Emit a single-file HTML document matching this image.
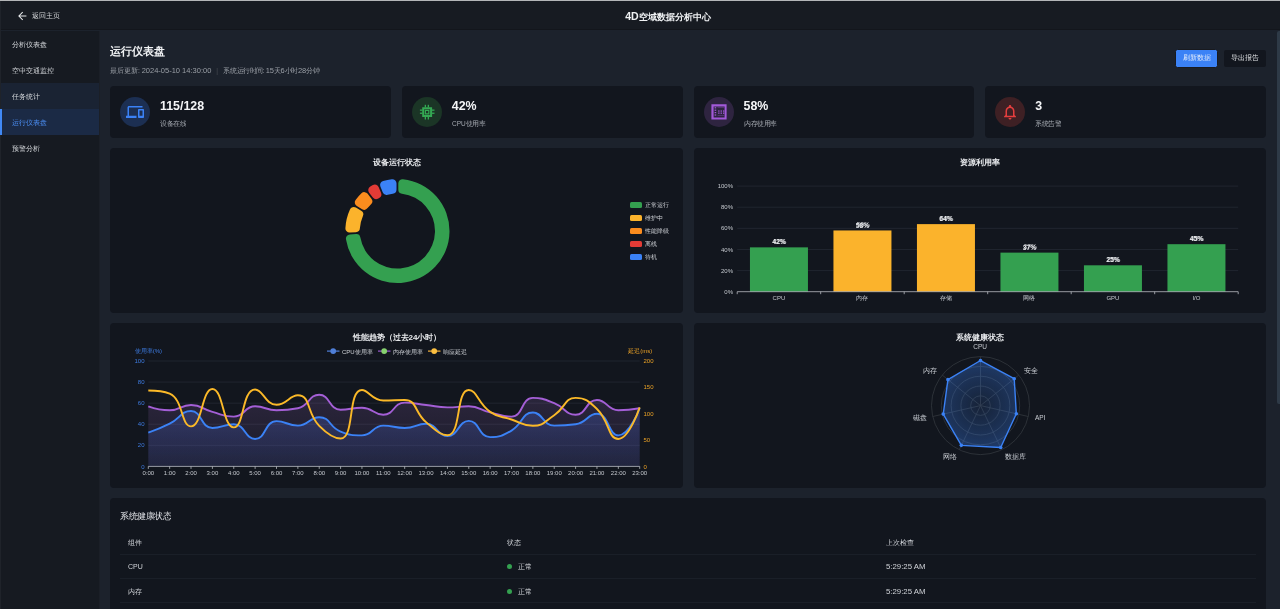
<!DOCTYPE html>
<html><head><meta charset="utf-8">
<style>
*{box-sizing:border-box;margin:0;padding:0}
html,body{width:1280px;height:609px;overflow:hidden;background:#1c222c;font-family:"Liberation Sans",sans-serif;color:#e6e8eb;position:relative}
#leftline{position:absolute;left:0;top:1px;width:1px;height:608px;background:#1f232a;z-index:5}
#wrap{position:absolute;left:0;top:0;width:1280px;height:609px;will-change:transform}
#topline{position:absolute;left:0;top:0;width:1280px;height:1px;background:#b4b6b8}
#header{position:absolute;left:0;top:1px;width:1280px;height:29px;background:#171b22;border-bottom:1px solid #13161c}
#back{position:absolute;left:17.5px;top:10px;font-size:7px;line-height:8px;color:#d8dadd;display:flex;align-items:center}
#back svg{margin-right:4.5px}
#htitle{position:absolute;left:0;width:1336px;top:10px;text-align:center;font-size:9px;line-height:10px;font-weight:bold;color:#f0f2f4}
#side{position:absolute;left:0;top:31px;width:100px;height:578px;background:#161a21;border-right:1px solid #1b1f27}
.nav{position:absolute;left:0;width:99px;height:26px;font-size:7px;color:#d4d7db;padding-left:12px;line-height:27.5px}
.nav.hover{background:#1a2333}
.nav.active{background:#1b2a45;color:#4a8cf0}
.nav.active:before{content:"";position:absolute;left:0;top:0;width:2.3px;height:26px;background:#4189f5;z-index:6}
#scroll{position:absolute;left:1276.8px;top:31px;width:4px;height:373px;background:#2e3a47;border-radius:2px 0 0 2px}
.card{position:absolute;background:#12161e;border-radius:4px}
.ic{position:absolute;left:10px;top:11.4px;width:30px;height:30px;border-radius:50%;display:flex;align-items:center;justify-content:center}
.ic svg{display:block}
.sval{position:absolute;left:50px;top:13.2px;font-size:12.4px;line-height:14px;font-weight:bold;color:#f4f5f7}
.slab{position:absolute;left:50px;top:33.5px;font-size:13px;line-height:16px;color:#a4a9b0;transform:scale(0.5);transform-origin:0 0;white-space:nowrap}
#ptitle{position:absolute;left:110.3px;top:44.8px;font-size:11.3px;line-height:12px;color:#f0f2f4;font-weight:bold}
#psub{position:absolute;left:110px;top:66.5px;font-size:6.6px;line-height:8px;color:#9a9fa6;white-space:pre}
#psub .sep{color:#4b5058;margin:0 5.5px 0 4.8px}
#psub .n{font-size:7.5px;letter-spacing:0}
.btn{position:absolute;font-size:7px;line-height:8px;text-align:center;border-radius:2px}
#charts{position:absolute;left:0;top:0}
.ct{font-size:8px;font-weight:bold;fill:#e8eaed;text-anchor:middle}
.lg{font-size:6px;fill:#cdd0d5}
.ax{font-size:6px;fill:#c4c8ce}
.bl{font-size:6.6px;fill:#e8eaed;text-anchor:middle;font-weight:bold;stroke:#12161e;stroke-width:0.6;paint-order:stroke}
.rl{font-size:6.5px;fill:#c8ccd2}
.ttl{position:absolute;font-size:17px;line-height:20px;color:#e0e2e6;transform:scale(0.5);transform-origin:0 0}
.th{position:absolute;font-size:7px;line-height:8px;color:#d0d3d8}
.td{position:absolute;font-size:7px;line-height:8px;color:#d0d3d8}
.rowline{position:absolute;left:120px;width:1136px;height:1px;background:#1a1f28}
.dot{position:absolute;left:506.8px;width:5px;height:5px;border-radius:50%;background:#34a050}
</style></head><body><div id="wrap">
<div id="topline"></div><div id="leftline"></div>
<div id="header">
  <div id="back"><svg width="10" height="10" viewBox="0 0 10 10"><path d="M8.4 5H0.9M4.7 1.2L0.9 5 4.7 8.8" stroke="#e6e8ea" stroke-width="1.05" fill="none"/></svg>返回主页</div>
  <div id="htitle"><span style="font-size:10.6px">4D</span>空域数据分析中心</div>
</div>
<div id="side">
  <div class="nav" style="top:0">分析仪表盘</div>
  <div class="nav" style="top:26px">空中交通监控</div>
  <div class="nav hover" style="top:52px">任务统计</div>
  <div class="nav active" style="top:78px">运行仪表盘</div>
  <div class="nav" style="top:104px">预警分析</div>
</div>
<div id="scroll"></div>
<div id="ptitle">运行仪表盘</div>
<div id="psub">最后更新: <span class="n">2024-05-10 14:30:00</span><span class="sep">|</span><span style="letter-spacing:-0.42px">系统运行时间: <span class="n">15</span>天<span class="n">6</span>小时<span class="n">28</span>分钟</span></div>
<div class="btn" style="left:1175px;top:49px;width:43.2px;height:18.6px;line-height:16.6px;background:#3b82f6;color:#dfe9fb;border:1px solid #181a1f;border-radius:2.5px">刷新数据</div>
<div class="btn" style="left:1224.3px;top:50px;width:41.8px;height:16.7px;line-height:16.7px;background:#12161e;color:#e0e2e4">导出报告</div>
<div class="card" style="left:110px;top:86px;width:280.75px;height:51.6px"><div class="ic" style="background:#1c2f52"><svg x="0" y="0" width="18" height="18" viewBox="0 0 24 24"><path fill="#3b82f6" d="M4 6h18V4H4c-1.1 0-2 .9-2 2v11H0v3h14v-3H4V6zm19 2h-6c-.55 0-1 .45-1 1v10c0 .55.45 1 1 1h6c.55 0 1-.45 1-1V9c0-.55-.45-1-1-1zm-1 9h-4v-7h4v7z"/></svg></div><div class="sval">115/128</div><div class="slab">设备在线</div></div>
<div class="card" style="left:401.75px;top:86px;width:280.75px;height:51.6px"><div class="ic" style="background:#1b3526"><svg width="30" height="30" viewBox="0 0 30 30"><g fill="#34a853"><path fill-rule="evenodd" d="M10.2 10.2h9.9v9.9h-9.9z M12.2 12.2v5.9h5.9v-5.9z"/><path fill-rule="evenodd" d="M12.8 12.8h4.6v4.6h-4.6z M14 14v2.2h2.2V14z"/><rect x="12.7" y="7.8" width="1.3" height="2.6"/><rect x="15.7" y="7.8" width="1.3" height="2.6"/><rect x="12.7" y="19.9" width="1.3" height="2.6"/><rect x="15.7" y="19.9" width="1.3" height="2.6"/><rect x="7.9" y="12.5" width="2.6" height="1.3"/><rect x="7.9" y="15.6" width="2.6" height="1.3"/><rect x="19.9" y="12.5" width="2.6" height="1.3"/><rect x="19.9" y="15.6" width="2.6" height="1.3"/></g></svg></div><div class="sval">42%</div><div class="slab">CPU使用率</div></div>
<div class="card" style="left:693.5px;top:86px;width:280.75px;height:51.6px"><div class="ic" style="background:#2e2440"><svg width="30" height="30" viewBox="0 0 30 30"><g fill="#a259d9"><path fill-rule="evenodd" d="M7.4 7.2h15.2v15.4H7.4z M9.6 9.4v11h11v-11z"/><rect x="10.6" y="10.2" width="1.6" height="1.2"/><rect x="10.6" y="12.6" width="1.6" height="1.2"/><rect x="10.6" y="15" width="1.6" height="1.2"/><rect x="10.6" y="17.4" width="1.6" height="1.2"/><rect x="13.6" y="10.3" width="6.6" height="0.5" opacity="0.6"/><rect x="13.6" y="18" width="6.6" height="0.5" opacity="0.6"/><rect x="14.2" y="13.4" width="1.3" height="1.3"/><rect x="16.6" y="13.4" width="1.3" height="1.3"/><rect x="19" y="13.4" width="1.3" height="1.3"/><rect x="14.2" y="15.5" width="1.3" height="1.3"/><rect x="16.6" y="15.5" width="1.3" height="1.3"/><rect x="19" y="15.5" width="1.3" height="1.3"/></g></svg></div><div class="sval">58%</div><div class="slab">内存使用率</div></div>
<div class="card" style="left:985.25px;top:86px;width:280.75px;height:51.6px"><div class="ic" style="background:#3e2024"><svg width="18" height="18" viewBox="0 0 24 24"><path fill="#e53e3e" d="M12 22c1.1 0 2-.9 2-2h-4c0 1.1.9 2 2 2zm6-6v-5c0-3.07-1.64-5.64-4.5-6.32V4c0-.83-.67-1.5-1.5-1.5s-1.5.67-1.5 1.5v.68C7.63 5.36 6 7.92 6 11v5l-2 2v1h16v-1l-2-2zm-2 1H8v-6c0-2.48 1.51-4.5 4-4.5s4 2.02 4 4.5v6z"/></svg></div><div class="sval">3</div><div class="slab">系统告警</div></div>
<div class="card" style="left:110px;top:148px;width:572.5px;height:165px"></div>
<div class="card" style="left:693.5px;top:148px;width:572.5px;height:165px"></div>
<div class="card" style="left:110px;top:323px;width:572.5px;height:165px"></div>
<div class="card" style="left:693.5px;top:323px;width:572.5px;height:165px"></div>
<div class="card" style="left:110px;top:498px;width:1156px;height:140px"></div>
<svg id="charts" width="1280" height="609" viewBox="0 0 1280 609"><path d="M402.95,179.20A52.1,52.1 0 1 1 345.96,239.25A4.2,4.2 0 0 1 349.88,234.39L356.02,234.07A4.2,4.2 0 0 1 360.37,237.53A37.6,37.6 0 1 0 401.99,193.68A4.2,4.2 0 0 1 398.30,189.51L398.30,183.37A4.2,4.2 0 0 1 402.95,179.20Z" fill="#34a050"/><path d="M345.38,228.17A52.1,52.1 0 0 1 349.95,209.49A4.2,4.2 0 0 1 355.91,207.60L361.20,210.72A4.2,4.2 0 0 1 362.92,216.01A37.6,37.6 0 0 0 359.89,228.37A4.2,4.2 0 0 1 355.92,232.27L349.79,232.59A4.2,4.2 0 0 1 345.38,228.17Z" fill="#fbb32c"/><path d="M355.58,199.93A52.1,52.1 0 0 1 361.46,193.28A4.2,4.2 0 0 1 367.69,193.76L371.43,198.63A4.2,4.2 0 0 1 371.04,204.19A37.6,37.6 0 0 0 367.57,208.11A4.2,4.2 0 0 1 362.11,209.17L356.82,206.05A4.2,4.2 0 0 1 355.58,199.93Z" fill="#fb8c1e"/><path d="M370.26,186.52A52.1,52.1 0 0 1 372.85,185.05A4.2,4.2 0 0 1 378.72,187.18L381.02,192.87A4.2,4.2 0 0 1 379.17,198.12A37.6,37.6 0 0 0 378.32,198.60A4.2,4.2 0 0 1 372.86,197.54L369.12,192.67A4.2,4.2 0 0 1 370.26,186.52Z" fill="#e33b36"/><path d="M383.14,180.89A52.1,52.1 0 0 1 391.85,179.20A4.2,4.2 0 0 1 396.50,183.37L396.50,189.51A4.2,4.2 0 0 1 392.81,193.68A37.6,37.6 0 0 0 387.67,194.68A4.2,4.2 0 0 1 382.69,192.20L380.39,186.50A4.2,4.2 0 0 1 383.14,180.89Z" fill="#3b82f6"/><text x="397" y="165" class="ct">设备运行状态</text><rect x="630" y="202" width="12" height="6" rx="1.5" fill="#34a050"/><text x="645" y="207.4" class="lg">正常运行</text><rect x="630" y="215" width="12" height="6" rx="1.5" fill="#fbb32c"/><text x="645" y="220.4" class="lg">维护中</text><rect x="630" y="228" width="12" height="6" rx="1.5" fill="#fb8c1e"/><text x="645" y="233.4" class="lg">性能降级</text><rect x="630" y="241" width="12" height="6" rx="1.5" fill="#e33b36"/><text x="645" y="246.4" class="lg">离线</text><rect x="630" y="254" width="12" height="6" rx="1.5" fill="#3b82f6"/><text x="645" y="259.4" class="lg">待机</text><text x="980" y="165" class="ct">资源利用率</text><text x="733" y="293.80" class="ax" text-anchor="end">0%</text><line x1="737.2" x2="1238.2" y1="270.58" y2="270.58" stroke="#242a33" stroke-width="0.8"/><text x="733" y="272.68" class="ax" text-anchor="end">20%</text><line x1="737.2" x2="1238.2" y1="249.46" y2="249.46" stroke="#242a33" stroke-width="0.8"/><text x="733" y="251.56" class="ax" text-anchor="end">40%</text><line x1="737.2" x2="1238.2" y1="228.34" y2="228.34" stroke="#242a33" stroke-width="0.8"/><text x="733" y="230.44" class="ax" text-anchor="end">60%</text><line x1="737.2" x2="1238.2" y1="207.22" y2="207.22" stroke="#242a33" stroke-width="0.8"/><text x="733" y="209.32" class="ax" text-anchor="end">80%</text><line x1="737.2" x2="1238.2" y1="186.10" y2="186.10" stroke="#242a33" stroke-width="0.8"/><text x="733" y="188.20" class="ax" text-anchor="end">100%</text><rect x="749.95" y="247.35" width="58" height="44.35" fill="#34a050"/><text x="778.95" y="244.45" class="bl">42%</text><text x="779.65" y="243.95" class="bl" style="stroke:none;opacity:0.7">42%</text><text x="778.95" y="299.6" class="ax" text-anchor="middle">CPU</text><rect x="833.45" y="230.45" width="58" height="61.25" fill="#fbb32c"/><text x="862.45" y="227.55" class="bl">58%</text><text x="863.15" y="227.05" class="bl" style="stroke:none;opacity:0.7">58%</text><text x="862.45" y="299.6" class="ax" text-anchor="middle">内存</text><rect x="916.95" y="224.12" width="58" height="67.58" fill="#fbb32c"/><text x="945.95" y="221.22" class="bl">64%</text><text x="946.65" y="220.72" class="bl" style="stroke:none;opacity:0.7">64%</text><text x="945.95" y="299.6" class="ax" text-anchor="middle">存储</text><rect x="1000.45" y="252.63" width="58" height="39.07" fill="#34a050"/><text x="1029.45" y="249.73" class="bl">37%</text><text x="1030.15" y="249.23" class="bl" style="stroke:none;opacity:0.7">37%</text><text x="1029.45" y="299.6" class="ax" text-anchor="middle">网络</text><rect x="1083.95" y="265.30" width="58" height="26.40" fill="#34a050"/><text x="1112.95" y="262.40" class="bl">25%</text><text x="1113.65" y="261.90" class="bl" style="stroke:none;opacity:0.7">25%</text><text x="1112.95" y="299.6" class="ax" text-anchor="middle">GPU</text><rect x="1167.45" y="244.18" width="58" height="47.52" fill="#34a050"/><text x="1196.45" y="241.28" class="bl">45%</text><text x="1197.15" y="240.78" class="bl" style="stroke:none;opacity:0.7">45%</text><text x="1196.45" y="299.6" class="ax" text-anchor="middle">I/O</text><line x1="737.2" x2="1238.2" y1="291.7" y2="291.7" stroke="#b9bdc3" stroke-width="0.8"/><line x1="737.20" x2="737.20" y1="291.7" y2="294.2" stroke="#b9bdc3" stroke-width="0.8"/><line x1="820.70" x2="820.70" y1="291.7" y2="294.2" stroke="#b9bdc3" stroke-width="0.8"/><line x1="904.20" x2="904.20" y1="291.7" y2="294.2" stroke="#b9bdc3" stroke-width="0.8"/><line x1="987.70" x2="987.70" y1="291.7" y2="294.2" stroke="#b9bdc3" stroke-width="0.8"/><line x1="1071.20" x2="1071.20" y1="291.7" y2="294.2" stroke="#b9bdc3" stroke-width="0.8"/><line x1="1154.70" x2="1154.70" y1="291.7" y2="294.2" stroke="#b9bdc3" stroke-width="0.8"/><line x1="1238.20" x2="1238.20" y1="291.7" y2="294.2" stroke="#b9bdc3" stroke-width="0.8"/><text x="397" y="340" class="ct">性能趋势（过去24小时）</text><defs><linearGradient id="gcpu" x1="0" y1="0" x2="0" y2="1"><stop offset="0" stop-color="#4d6ce0" stop-opacity="0.28"/><stop offset="1" stop-color="#4d6ce0" stop-opacity="0.11"/></linearGradient><linearGradient id="gmem" x1="0" y1="0" x2="0" y2="1"><stop offset="0" stop-color="#a070c8" stop-opacity="0.18"/><stop offset="1" stop-color="#a070c8" stop-opacity="0.07"/></linearGradient><radialGradient id="grad" gradientUnits="userSpaceOnUse" cx="980.5" cy="405.6" r="49"><stop offset="0" stop-color="#3b82f6" stop-opacity="0.12"/><stop offset="1" stop-color="#3b82f6" stop-opacity="0.36"/></radialGradient></defs><line x1="148.3" x2="639.69" y1="445.32" y2="445.32" stroke="#242a33" stroke-width="0.8"/><line x1="148.3" x2="639.69" y1="424.24" y2="424.24" stroke="#242a33" stroke-width="0.8"/><line x1="148.3" x2="639.69" y1="403.16" y2="403.16" stroke="#242a33" stroke-width="0.8"/><line x1="148.3" x2="639.69" y1="382.08" y2="382.08" stroke="#242a33" stroke-width="0.8"/><line x1="148.3" x2="639.69" y1="361.00" y2="361.00" stroke="#242a33" stroke-width="0.8"/><text x="144.5" y="468.50" class="ax" fill="#3d7be0" text-anchor="end" style="fill:#3d7be0">0</text><text x="144.5" y="447.42" class="ax" fill="#3d7be0" text-anchor="end" style="fill:#3d7be0">20</text><text x="144.5" y="426.34" class="ax" fill="#3d7be0" text-anchor="end" style="fill:#3d7be0">40</text><text x="144.5" y="405.26" class="ax" fill="#3d7be0" text-anchor="end" style="fill:#3d7be0">60</text><text x="144.5" y="384.18" class="ax" fill="#3d7be0" text-anchor="end" style="fill:#3d7be0">80</text><text x="144.5" y="363.10" class="ax" fill="#3d7be0" text-anchor="end" style="fill:#3d7be0">100</text><text x="643.5" y="468.50" class="ax" style="fill:#e9a126">0</text><text x="643.5" y="442.15" class="ax" style="fill:#e9a126">50</text><text x="643.5" y="415.80" class="ax" style="fill:#e9a126">100</text><text x="643.5" y="389.45" class="ax" style="fill:#e9a126">150</text><text x="643.5" y="363.10" class="ax" style="fill:#e9a126">200</text><path d="M148.30,406.32C148.30,406.32,159.05,410.22,169.67,410.22C180.42,410.22,180.46,404.95,191.03,404.95C201.82,404.95,201.57,408.94,212.40,411.91C222.94,414.79,223.51,416.65,233.76,416.65C244.87,416.65,243.97,406.32,255.12,406.32C265.33,406.32,265.74,410.22,276.49,410.22C287.11,410.22,288.04,410.22,297.86,408.22C309.41,405.86,308.71,394.73,319.22,394.73C330.07,394.73,328.86,409.69,340.59,409.69C350.23,409.69,351.52,407.69,361.95,407.69C372.89,407.69,373.10,414.75,383.31,414.75C394.47,414.75,393.28,402.63,404.68,402.63C414.65,402.63,415.37,403.77,426.05,404.95C436.73,406.14,436.70,407.38,447.41,407.38C458.06,407.38,458.30,406.32,468.77,406.32C479.66,406.32,479.35,409.83,490.14,412.44C500.71,414.99,502.24,416.65,511.50,416.65C523.60,416.65,520.83,397.89,532.87,397.89C542.19,397.89,544.08,399.15,554.23,403.16C565.45,407.59,565.27,414.75,575.60,414.75C586.63,414.75,585.79,400.00,596.96,400.00C607.16,400.00,607.12,410.22,618.33,410.22C628.49,410.22,639.69,408.22,639.69,408.22L639.69,466.4L148.3,466.4Z" fill="url(#gmem)"/><path d="M148.30,432.67C148.30,432.67,159.35,428.93,169.67,423.71C180.72,418.12,180.84,411.06,191.03,411.06C202.20,411.06,200.50,427.93,212.40,427.93C221.87,427.93,224.04,424.24,233.76,424.24C245.40,424.24,244.82,439.00,255.12,439.00C266.19,439.00,264.51,421.08,276.49,421.08C285.87,421.08,287.44,425.61,297.86,425.61C308.81,425.61,309.16,417.18,319.22,417.18C330.52,417.18,328.98,427.11,340.59,431.62C350.35,435.41,351.69,435.41,361.95,435.41C373.06,435.41,372.15,425.61,383.31,425.61C393.52,425.61,394.07,427.93,404.68,427.93C415.43,427.93,416.04,423.71,426.05,423.71C437.40,423.71,437.05,436.15,447.41,436.15C458.42,436.15,458.21,420.87,468.77,420.87C479.57,420.87,478.48,437.10,490.14,437.10C499.85,437.10,502.03,436.03,511.50,430.56C523.39,423.70,521.60,412.44,532.87,412.44C542.97,412.44,542.70,425.61,554.23,425.61C564.07,425.61,565.48,425.61,575.60,424.24C586.84,422.72,587.59,413.81,596.96,413.81C608.95,413.81,608.34,435.41,618.33,435.41C629.70,435.41,639.69,408.22,639.69,408.22L639.69,466.4L148.3,466.4Z" fill="url(#gcpu)"/><path d="M148.30,406.32C148.30,406.32,159.05,410.22,169.67,410.22C180.42,410.22,180.46,404.95,191.03,404.95C201.82,404.95,201.57,408.94,212.40,411.91C222.94,414.79,223.51,416.65,233.76,416.65C244.87,416.65,243.97,406.32,255.12,406.32C265.33,406.32,265.74,410.22,276.49,410.22C287.11,410.22,288.04,410.22,297.86,408.22C309.41,405.86,308.71,394.73,319.22,394.73C330.07,394.73,328.86,409.69,340.59,409.69C350.23,409.69,351.52,407.69,361.95,407.69C372.89,407.69,373.10,414.75,383.31,414.75C394.47,414.75,393.28,402.63,404.68,402.63C414.65,402.63,415.37,403.77,426.05,404.95C436.73,406.14,436.70,407.38,447.41,407.38C458.06,407.38,458.30,406.32,468.77,406.32C479.66,406.32,479.35,409.83,490.14,412.44C500.71,414.99,502.24,416.65,511.50,416.65C523.60,416.65,520.83,397.89,532.87,397.89C542.19,397.89,544.08,399.15,554.23,403.16C565.45,407.59,565.27,414.75,575.60,414.75C586.63,414.75,585.79,400.00,596.96,400.00C607.16,400.00,607.12,410.22,618.33,410.22C628.49,410.22,639.69,408.22,639.69,408.22" fill="none" stroke="#a45fd6" stroke-width="1.9"/><path d="M148.30,432.67C148.30,432.67,159.35,428.93,169.67,423.71C180.72,418.12,180.84,411.06,191.03,411.06C202.20,411.06,200.50,427.93,212.40,427.93C221.87,427.93,224.04,424.24,233.76,424.24C245.40,424.24,244.82,439.00,255.12,439.00C266.19,439.00,264.51,421.08,276.49,421.08C285.87,421.08,287.44,425.61,297.86,425.61C308.81,425.61,309.16,417.18,319.22,417.18C330.52,417.18,328.98,427.11,340.59,431.62C350.35,435.41,351.69,435.41,361.95,435.41C373.06,435.41,372.15,425.61,383.31,425.61C393.52,425.61,394.07,427.93,404.68,427.93C415.43,427.93,416.04,423.71,426.05,423.71C437.40,423.71,437.05,436.15,447.41,436.15C458.42,436.15,458.21,420.87,468.77,420.87C479.57,420.87,478.48,437.10,490.14,437.10C499.85,437.10,502.03,436.03,511.50,430.56C523.39,423.70,521.60,412.44,532.87,412.44C542.97,412.44,542.70,425.61,554.23,425.61C564.07,425.61,565.48,425.61,575.60,424.24C586.84,422.72,587.59,413.81,596.96,413.81C608.95,413.81,608.34,435.41,618.33,435.41C629.70,435.41,639.69,408.22,639.69,408.22" fill="none" stroke="#3b82f6" stroke-width="1.9"/><path d="M148.30,390.51C148.30,390.51,162.06,390.51,169.67,393.67C183.42,399.39,180.87,426.35,191.03,426.35C202.24,426.35,201.83,388.93,212.40,388.93C223.19,388.93,223.02,427.40,233.76,427.40C244.39,427.40,241.80,389.46,255.12,389.46C263.16,389.46,265.19,404.74,276.49,404.74C286.55,404.74,289.62,395.25,297.86,395.25C310.99,395.25,306.39,412.85,319.22,425.82C327.76,434.46,333.77,438.47,340.59,438.47C355.13,438.47,347.21,389.99,361.95,389.99C368.58,389.99,372.05,400.52,383.31,400.52C393.42,400.52,395.92,400.00,404.68,400.00C417.29,400.00,414.28,412.41,426.05,422.13C435.64,430.06,440.28,435.31,447.41,435.31C461.64,435.31,455.51,389.99,468.77,389.99C476.87,389.99,477.88,403.39,490.14,411.86C499.24,418.14,500.73,415.97,511.50,419.50C522.09,422.96,522.54,425.82,532.87,425.82C543.91,425.82,544.33,421.76,554.23,415.28C565.69,407.79,564.20,397.89,575.60,397.89C585.56,397.89,588.53,400.84,596.96,408.96C609.89,421.39,607.83,439.00,618.33,439.00C629.20,439.00,639.69,407.38,639.69,407.38" fill="none" stroke="#fbb928" stroke-width="1.9"/><line x1="148.3" x2="639.69" y1="466.4" y2="466.4" stroke="#b9bdc3" stroke-width="0.8"/><line x1="148.30" x2="148.30" y1="466.4" y2="468.9" stroke="#b9bdc3" stroke-width="0.8"/><text x="148.30" y="475" class="ax" text-anchor="middle">0:00</text><line x1="169.67" x2="169.67" y1="466.4" y2="468.9" stroke="#b9bdc3" stroke-width="0.8"/><text x="169.67" y="475" class="ax" text-anchor="middle">1:00</text><line x1="191.03" x2="191.03" y1="466.4" y2="468.9" stroke="#b9bdc3" stroke-width="0.8"/><text x="191.03" y="475" class="ax" text-anchor="middle">2:00</text><line x1="212.40" x2="212.40" y1="466.4" y2="468.9" stroke="#b9bdc3" stroke-width="0.8"/><text x="212.40" y="475" class="ax" text-anchor="middle">3:00</text><line x1="233.76" x2="233.76" y1="466.4" y2="468.9" stroke="#b9bdc3" stroke-width="0.8"/><text x="233.76" y="475" class="ax" text-anchor="middle">4:00</text><line x1="255.12" x2="255.12" y1="466.4" y2="468.9" stroke="#b9bdc3" stroke-width="0.8"/><text x="255.12" y="475" class="ax" text-anchor="middle">5:00</text><line x1="276.49" x2="276.49" y1="466.4" y2="468.9" stroke="#b9bdc3" stroke-width="0.8"/><text x="276.49" y="475" class="ax" text-anchor="middle">6:00</text><line x1="297.86" x2="297.86" y1="466.4" y2="468.9" stroke="#b9bdc3" stroke-width="0.8"/><text x="297.86" y="475" class="ax" text-anchor="middle">7:00</text><line x1="319.22" x2="319.22" y1="466.4" y2="468.9" stroke="#b9bdc3" stroke-width="0.8"/><text x="319.22" y="475" class="ax" text-anchor="middle">8:00</text><line x1="340.59" x2="340.59" y1="466.4" y2="468.9" stroke="#b9bdc3" stroke-width="0.8"/><text x="340.59" y="475" class="ax" text-anchor="middle">9:00</text><line x1="361.95" x2="361.95" y1="466.4" y2="468.9" stroke="#b9bdc3" stroke-width="0.8"/><text x="361.95" y="475" class="ax" text-anchor="middle">10:00</text><line x1="383.31" x2="383.31" y1="466.4" y2="468.9" stroke="#b9bdc3" stroke-width="0.8"/><text x="383.31" y="475" class="ax" text-anchor="middle">11:00</text><line x1="404.68" x2="404.68" y1="466.4" y2="468.9" stroke="#b9bdc3" stroke-width="0.8"/><text x="404.68" y="475" class="ax" text-anchor="middle">12:00</text><line x1="426.05" x2="426.05" y1="466.4" y2="468.9" stroke="#b9bdc3" stroke-width="0.8"/><text x="426.05" y="475" class="ax" text-anchor="middle">13:00</text><line x1="447.41" x2="447.41" y1="466.4" y2="468.9" stroke="#b9bdc3" stroke-width="0.8"/><text x="447.41" y="475" class="ax" text-anchor="middle">14:00</text><line x1="468.77" x2="468.77" y1="466.4" y2="468.9" stroke="#b9bdc3" stroke-width="0.8"/><text x="468.77" y="475" class="ax" text-anchor="middle">15:00</text><line x1="490.14" x2="490.14" y1="466.4" y2="468.9" stroke="#b9bdc3" stroke-width="0.8"/><text x="490.14" y="475" class="ax" text-anchor="middle">16:00</text><line x1="511.50" x2="511.50" y1="466.4" y2="468.9" stroke="#b9bdc3" stroke-width="0.8"/><text x="511.50" y="475" class="ax" text-anchor="middle">17:00</text><line x1="532.87" x2="532.87" y1="466.4" y2="468.9" stroke="#b9bdc3" stroke-width="0.8"/><text x="532.87" y="475" class="ax" text-anchor="middle">18:00</text><line x1="554.23" x2="554.23" y1="466.4" y2="468.9" stroke="#b9bdc3" stroke-width="0.8"/><text x="554.23" y="475" class="ax" text-anchor="middle">19:00</text><line x1="575.60" x2="575.60" y1="466.4" y2="468.9" stroke="#b9bdc3" stroke-width="0.8"/><text x="575.60" y="475" class="ax" text-anchor="middle">20:00</text><line x1="596.96" x2="596.96" y1="466.4" y2="468.9" stroke="#b9bdc3" stroke-width="0.8"/><text x="596.96" y="475" class="ax" text-anchor="middle">21:00</text><line x1="618.33" x2="618.33" y1="466.4" y2="468.9" stroke="#b9bdc3" stroke-width="0.8"/><text x="618.33" y="475" class="ax" text-anchor="middle">22:00</text><line x1="639.69" x2="639.69" y1="466.4" y2="468.9" stroke="#b9bdc3" stroke-width="0.8"/><text x="639.69" y="475" class="ax" text-anchor="middle">23:00</text><text x="134.7" y="352.5" class="ax" style="fill:#3d7be0">使用率(%)</text><text x="652.3" y="352.5" class="ax" text-anchor="end" style="fill:#e9a126">延迟(ms)</text><line x1="327" x2="339.5" y1="351.1" y2="351.1" stroke="#4f7fd8" stroke-width="1.2"/><circle cx="333.2" cy="351.1" r="2.9" fill="#4f7fd8"/><text x="342" y="353.6" class="lg">CPU使用率</text><line x1="378" x2="390.5" y1="351.1" y2="351.1" stroke="#9b59d0" stroke-width="1.2"/><circle cx="384.2" cy="351.1" r="2.9" fill="#86d06f"/><text x="393" y="353.6" class="lg">内存使用率</text><line x1="428" x2="440.5" y1="351.1" y2="351.1" stroke="#f5b23a" stroke-width="1.2"/><circle cx="434.2" cy="351.1" r="2.9" fill="#fbbf40"/><text x="443" y="353.6" class="lg">响应延迟</text><text x="980" y="340" class="ct">系统健康状态</text><circle cx="980.5" cy="405.6" r="9.80" fill="none" stroke="#33383f" stroke-width="0.8"/><circle cx="980.5" cy="405.6" r="19.60" fill="none" stroke="#33383f" stroke-width="0.8"/><circle cx="980.5" cy="405.6" r="29.40" fill="none" stroke="#33383f" stroke-width="0.8"/><circle cx="980.5" cy="405.6" r="39.20" fill="none" stroke="#33383f" stroke-width="0.8"/><circle cx="980.5" cy="405.6" r="49.00" fill="none" stroke="#33383f" stroke-width="0.8"/><line x1="980.5" y1="405.6" x2="980.50" y2="356.60" stroke="#33383f" stroke-width="0.8"/><text x="980.20" y="348.90" class="rl" text-anchor="middle">CPU</text><line x1="980.5" y1="405.6" x2="1018.81" y2="375.05" stroke="#33383f" stroke-width="0.8"/><text x="1024.00" y="372.60" class="rl" text-anchor="start">安全</text><line x1="980.5" y1="405.6" x2="1028.27" y2="416.50" stroke="#33383f" stroke-width="0.8"/><text x="1035.00" y="420.30" class="rl" text-anchor="start">API</text><line x1="980.5" y1="405.6" x2="1001.76" y2="449.75" stroke="#33383f" stroke-width="0.8"/><text x="1004.80" y="458.80" class="rl" text-anchor="start">数据库</text><line x1="980.5" y1="405.6" x2="959.24" y2="449.75" stroke="#33383f" stroke-width="0.8"/><text x="957.20" y="458.80" class="rl" text-anchor="end">网络</text><line x1="980.5" y1="405.6" x2="932.73" y2="416.50" stroke="#33383f" stroke-width="0.8"/><text x="927.00" y="420.30" class="rl" text-anchor="end">磁盘</text><line x1="980.5" y1="405.6" x2="942.19" y2="375.05" stroke="#33383f" stroke-width="0.8"/><text x="937.00" y="372.60" class="rl" text-anchor="end">内存</text><polygon points="980.50,360.52 1014.21,378.72 1016.33,413.78 1000.70,447.54 961.37,445.33 943.24,414.10 947.94,379.63" fill="url(#grad)" stroke="#3b82f6" stroke-width="1.4" stroke-linejoin="round"/><circle cx="980.50" cy="360.52" r="1.8" fill="#3b82f6"/><circle cx="1014.21" cy="378.72" r="1.8" fill="#3b82f6"/><circle cx="1016.33" cy="413.78" r="1.8" fill="#3b82f6"/><circle cx="1000.70" cy="447.54" r="1.8" fill="#3b82f6"/><circle cx="961.37" cy="445.33" r="1.8" fill="#3b82f6"/><circle cx="943.24" cy="414.10" r="1.8" fill="#3b82f6"/><circle cx="947.94" cy="379.63" r="1.8" fill="#3b82f6"/></svg>
<div class="ttl" style="left:120px;top:510.5px">系统健康状态</div>
<div class="th" style="left:128px;top:539px">组件</div><div class="th" style="left:506.5px;top:539px">状态</div><div class="th" style="left:886px;top:539px">上次检查</div>
<div class="rowline" style="top:554.2px"></div>
<div class="rowline" style="top:578.1px"></div>
<div class="rowline" style="top:602.2px"></div>
<div class="td" style="left:128px;top:562.7px">CPU</div>
<div class="dot" style="top:564.3000000000001px"></div><div class="td" style="left:518px;top:562.7px">正常</div>
<div class="td" style="left:886px;top:562.7px;font-size:7.8px">5:29:25 AM</div>
<div class="td" style="left:128px;top:587.6px">内存</div>
<div class="dot" style="top:589.2px"></div><div class="td" style="left:518px;top:587.6px">正常</div>
<div class="td" style="left:886px;top:587.6px;font-size:7.8px">5:29:25 AM</div>
</div></body></html>
